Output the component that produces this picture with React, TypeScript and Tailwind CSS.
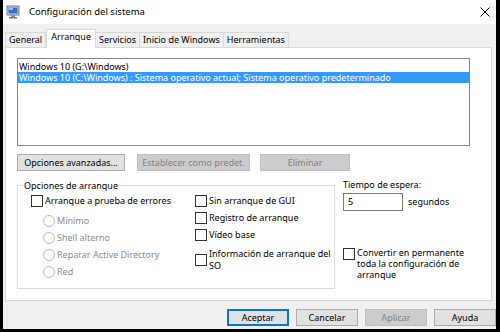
import React from 'react';

const Check = ({ label, className = '' }: { label: React.ReactNode; className?: string }) => (
  <div className={`flex items-start ${className}`}>
    <span className="mt-[1px] w-[12px] h-[12px] shrink-0 border border-[#333] bg-white" />
    <span className="ml-[2px]">{label}</span>
  </div>
);

const Radio = ({ label }: { label: string }) => (
  <div className="flex items-center h-[17px] pl-[12px] text-[#8c8c8c]">
    <span className="w-[12px] h-[12px] rounded-full border border-[#bcbcbc] bg-white" />
    <span className="ml-[2px]">{label}</span>
  </div>
);

const Btn = ({ label, w, disabled, focused }: { label: string; w: string; disabled?: boolean; focused?: boolean }) => (
  <div
    className={`${w} h-[17px] flex items-center justify-center border ${
      disabled
        ? 'bg-[#cccccc] border-[#bfbfbf] text-[#838383]'
        : focused
        ? 'bg-[#e1e1e1] border-[#0078d7] shadow-[inset_0_0_0_1px_#0078d7]'
        : 'bg-[#e1e1e1] border-[#adadad]'
    }`}
  >
    {label}
  </div>
);

const tabs = ['General', 'Arranque', 'Servicios', 'Inicio de Windows', 'Herramientas'];

export default function App() {
  return (
    <div className="w-[500px] h-[332px] bg-black pl-[3px] pr-[4px] pb-[3px] font-['Noto_Sans',sans-serif] text-[9px] leading-[12px] text-black">
      <div className="h-full bg-[#f0f0f0] flex flex-col overflow-hidden">
        {/* barra de título */}
        <div className="h-[24px] shrink-0 bg-white flex items-center">
          <svg width="14" height="14" viewBox="0 0 14 14" className="ml-[3px]">
            <rect x="1" y="1" width="12" height="9" fill="#cfd6de" stroke="#6d7b8a" strokeWidth="1" />
            <rect x="2.5" y="2.5" width="9" height="6" fill="#2f6fd0" />
            <rect x="3" y="3" width="4" height="2" fill="#8fc1ff" />
            <rect x="5" y="10" width="4" height="2" fill="#8a96a3" />
            <rect x="3" y="12" width="8" height="1.5" fill="#6d7b8a" />
          </svg>
          <span className="ml-[9px] text-[9.5px]">Configuración del sistema</span>
          <svg width="10" height="10" viewBox="0 0 10 10" className="ml-auto mr-[6px]">
            <path d="M0.5 0.5 L9.5 9.5 M9.5 0.5 L0.5 9.5" stroke="#000" strokeWidth="1" />
          </svg>
        </div>

        {/* pestañas */}
        <div className="h-[23px] shrink-0 flex items-end pl-[2px]">
          {tabs.map(t =>
            t === 'Arranque' ? (
              <div key={t} className="relative z-10 h-[19px] -mb-px px-[4px] pb-[4px] flex items-center bg-white border border-b-0 border-[#d9d9d9]">
                {t}
              </div>
            ) : (
              <div key={t} className="h-[15px] px-[3px] flex items-center bg-[#f0f0f0] border border-b-0 border-[#d9d9d9] -ml-px first:ml-0">
                {t}
              </div>
            )
          )}
        </div>

        {/* panel */}
        <div className="ml-[2px] w-[487px] h-[254px] shrink-0 bg-white border border-[#d9d9d9] flex flex-col">
          <div className="ml-[11px] mt-[10px] w-[453px] h-[88px] border border-[#828790] bg-white pt-[2px] leading-[11px]">
            <div className="px-[1px] h-[11px]">Windows 10 (G:\Windows)</div>
            <div className="px-[1px] h-[11px] bg-[#3399ff] text-white">
              Windows 10 (C:\Windows) : Sistema operativo actual; Sistema operativo predeterminado
            </div>
          </div>

          <div className="ml-[11px] mt-[8px] flex">
            <Btn label="Opciones avanzadas..." w="w-[108px]" />
            <div className="ml-[12px]">
              <Btn label="Establecer como predet." w="w-[113px]" disabled />
            </div>
            <div className="ml-[10px]">
              <Btn label="Eliminar" w="w-[90px]" disabled />
            </div>
          </div>

          <div className="flex items-start mt-[8px]">
            <fieldset className="ml-[11px] w-[318px] h-[110px] border border-[#dcdcdc] px-0 pt-[3px] pb-0">
              <legend className="ml-[5px] px-[1px] leading-[13px]">Opciones de arranque</legend>
              <div className="flex">
                <div className="w-[177px] pl-[13px]">
                  <Check label="Arranque a prueba de errores" className="h-[17px] items-center [&>span:first-child]:mt-0" />
                  <Radio label="Mínimo" />
                  <Radio label="Shell alterno" />
                  <Radio label="Reparar Active Directory" />
                  <Radio label="Red" />
                </div>
                <div className="flex flex-col">
                  <Check label="Sin arranque de GUI" className="h-[17px] items-center [&>span:first-child]:mt-0" />
                  <Check label="Registro de arranque" className="h-[17px] items-center [&>span:first-child]:mt-0" />
                  <Check label="Vídeo base" className="h-[17px] items-center [&>span:first-child]:mt-0" />
                  <div className="flex items-center mt-[2px]">
                    <span className="w-[12px] h-[12px] shrink-0 border border-[#333] bg-white" />
                    <span className="ml-[2px]">Información de arranque del<br />SO</span>
                  </div>
                </div>
              </div>
            </fieldset>

            <div className="ml-[8px] flex flex-col">
              <div className="leading-[12px]">Tiempo de espera:</div>
              <div className="flex items-center mt-[2px]">
                <div className="w-[60px] h-[18px] border border-[#7a7a7a] bg-white pl-[4px] flex items-center">5</div>
                <span className="ml-[5px]">segundos</span>
              </div>
              <div className="flex items-start mt-[36px] leading-[11px]">
                <span className="mt-[1px] w-[12px] h-[12px] shrink-0 border border-[#333] bg-white" />
                <span className="ml-[2px]">
                  Convertir en permanente
                  <br />
                  toda la configuración de
                  <br />
                  arranque
                </span>
              </div>
            </div>
          </div>
        </div>

        {/* botones */}
        <div className="flex-1 flex justify-end items-start pt-[8px] gap-[7px]">
          <Btn label="Aceptar" w="w-[62px]" focused />
          <Btn label="Cancelar" w="w-[62px]" />
          <Btn label="Aplicar" w="w-[62px]" disabled />
          <Btn label="Ayuda" w="w-[62px]" />
        </div>
      </div>
    </div>
  );
}
